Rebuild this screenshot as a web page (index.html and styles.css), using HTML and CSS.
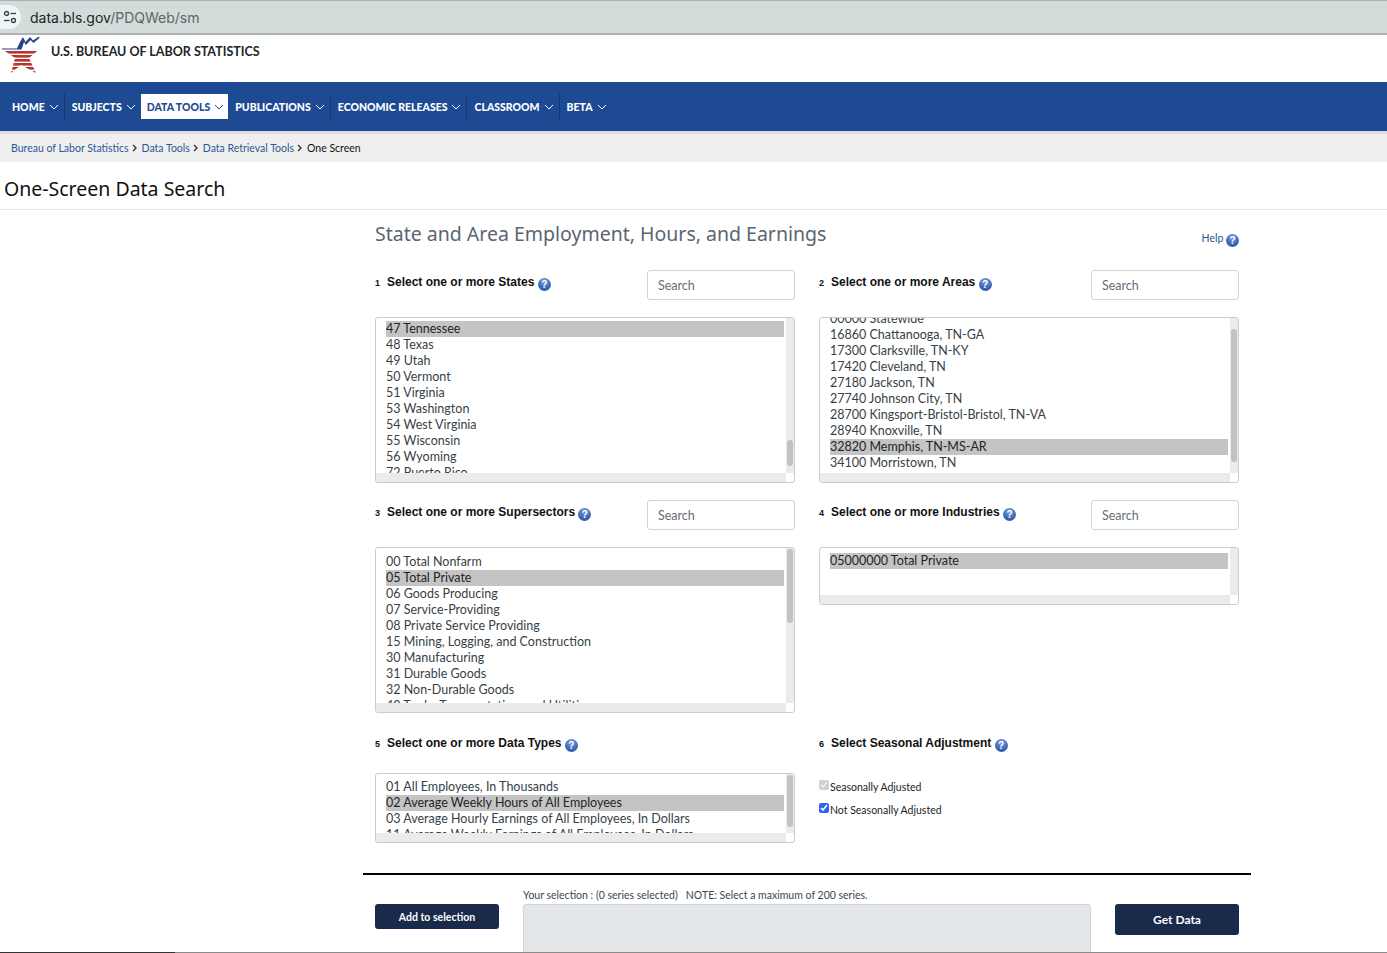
FILE: index.html
```html
<!DOCTYPE html>
<html lang="en">
<head>
<meta charset="UTF-8">
<title>One-Screen Data Search</title>
<link rel="stylesheet" href="styles.css">
</head>
<body>
<div class="addressbar">
  <span class="site-icon">
    <svg width="14" height="14" viewBox="0 0 14 14" fill="none" stroke="#3c4043" stroke-width="1.3">
      <circle cx="3.5" cy="3.5" r="2"/><path d="M7.5 3.5H13"/>
      <circle cx="10.5" cy="10.5" r="2"/><path d="M1 10.5H6.5"/>
    </svg>
  </span>
  <span class="url"><b>data.bls.gov</b>/PDQWeb/sm</span>
</div>

<header class="brand">
  <svg class="logo" width="40" height="38" viewBox="0 0 40 38">
    <defs>
      <clipPath id="starclip"><polygon points="1,13 15,13 20,1 25,13 38,13.500 28,22 35,37 20,29 10,37 14,22"/></clipPath>
    </defs>
    <g clip-path="url(#starclip)">
      <rect x="0" y="13.500" width="40" height="24" fill="#fff"/>
      <rect x="0" y="15" width="40" height="2.600" fill="#b5362c"/>
      <rect x="0" y="19" width="40" height="2.600" fill="#b5362c"/>
      <rect x="0" y="23" width="40" height="2.600" fill="#b5362c"/>
      <rect x="0" y="27" width="40" height="2.600" fill="#b5362c"/>
      <rect x="0" y="31" width="40" height="2.600" fill="#b5362c"/>
      <rect x="0" y="35" width="40" height="2.600" fill="#b5362c"/>
    </g>
    <path d="M1 12.500H16L19 6 22 1 24.500 6 29 1 32 4.500 38 0.500 38.500 2 32.500 7 29.500 4 25 9 23 6 20.500 13.500H1Z" fill="#27408b"/>
  </svg>
  <span class="brand-name">U.S. BUREAU OF LABOR STATISTICS</span>
</header>

<nav class="mainnav">
  <a class="nav-item nav-home">HOME<svg class="chev" viewBox="0 0 10 6"><path d="M1 1l4 4 4-4"/></svg></a>
  <a class="nav-item nav-subjects">SUBJECTS<svg class="chev" viewBox="0 0 10 6"><path d="M1 1l4 4 4-4"/></svg></a>
  <a class="nav-item nav-active">DATA TOOLS<svg class="chev" viewBox="0 0 10 6"><path d="M1 1l4 4 4-4"/></svg></a>
  <a class="nav-item">PUBLICATIONS<svg class="chev" viewBox="0 0 10 6"><path d="M1 1l4 4 4-4"/></svg></a>
  <a class="nav-item">ECONOMIC RELEASES<svg class="chev" viewBox="0 0 10 6"><path d="M1 1l4 4 4-4"/></svg></a>
  <a class="nav-item">CLASSROOM<svg class="chev" viewBox="0 0 10 6"><path d="M1 1l4 4 4-4"/></svg></a>
  <a class="nav-item nav-last">BETA<svg class="chev" viewBox="0 0 10 6"><path d="M1 1l4 4 4-4"/></svg></a>
</nav>

<div class="crumbs">
  <a>Bureau of Labor Statistics</a><svg class="crumb-sep" viewBox="0 0 6 8"><path d="M1 1l3 3-3 3"/></svg>
  <a>Data Tools</a><svg class="crumb-sep" viewBox="0 0 6 8"><path d="M1 1l3 3-3 3"/></svg>
  <a>Data Retrieval Tools</a><svg class="crumb-sep" viewBox="0 0 6 8"><path d="M1 1l3 3-3 3"/></svg>
  <span class="crumb-current">One Screen</span>
</div>

<h1 class="page-title">One-Screen Data Search</h1>

<main class="panel">
  <div class="panel-head">
    <h2>State and Area Employment, Hours, and Earnings</h2>
    <a class="help">Help <span class="q">?</span></a>
  </div>

  <div class="grid">
    <section class="field">
      <div class="field-head">
        <label><small>1</small>Select one or more States <span class="q">?</span></label>
        <input class="search" placeholder="Search">
      </div>
      <div class="list list-states">
        <div class="opts">
          <div class="opt">46 South Dakota</div>
          <div class="opt sel">47 Tennessee</div>
          <div class="opt">48 Texas</div>
          <div class="opt">49 Utah</div>
          <div class="opt">50 Vermont</div>
          <div class="opt">51 Virginia</div>
          <div class="opt">53 Washington</div>
          <div class="opt">54 West Virginia</div>
          <div class="opt">55 Wisconsin</div>
          <div class="opt">56 Wyoming</div>
          <div class="opt">72 Puerto Rico</div>
        </div>
        <i class="track-v"></i><i class="track-h"></i><i class="thumb"></i>
      </div>
    </section>

    <section class="field">
      <div class="field-head">
        <label><small>2</small>Select one or more Areas <span class="q">?</span></label>
        <input class="search" placeholder="Search">
      </div>
      <div class="list list-areas">
        <div class="opts">
          <div class="opt">00000 Statewide</div>
          <div class="opt">16860 Chattanooga, TN-GA</div>
          <div class="opt">17300 Clarksville, TN-KY</div>
          <div class="opt">17420 Cleveland, TN</div>
          <div class="opt">27180 Jackson, TN</div>
          <div class="opt">27740 Johnson City, TN</div>
          <div class="opt">28700 Kingsport-Bristol-Bristol, TN-VA</div>
          <div class="opt">28940 Knoxville, TN</div>
          <div class="opt sel">32820 Memphis, TN-MS-AR</div>
          <div class="opt">34100 Morristown, TN</div>
          <div class="opt">34980 Nashville-Davidson--Murfreesboro</div>
        </div>
        <i class="track-v"></i><i class="track-h"></i><i class="thumb"></i>
      </div>
    </section>

    <section class="field">
      <div class="field-head">
        <label><small>3</small>Select one or more Supersectors <span class="q">?</span></label>
        <input class="search" placeholder="Search">
      </div>
      <div class="list list-super">
        <div class="opts">
          <div class="opt">00 Total Nonfarm</div>
          <div class="opt sel">05 Total Private</div>
          <div class="opt">06 Goods Producing</div>
          <div class="opt">07 Service-Providing</div>
          <div class="opt">08 Private Service Providing</div>
          <div class="opt">15 Mining, Logging, and Construction</div>
          <div class="opt">30 Manufacturing</div>
          <div class="opt">31 Durable Goods</div>
          <div class="opt">32 Non-Durable Goods</div>
          <div class="opt">40 Trade, Transportation, and Utilities</div>
        </div>
        <i class="track-v"></i><i class="track-h"></i><i class="thumb"></i>
      </div>
    </section>

    <section class="field">
      <div class="field-head">
        <label><small>4</small>Select one or more Industries <span class="q">?</span></label>
        <input class="search" placeholder="Search">
      </div>
      <div class="list list-industries">
        <div class="opts">
          <div class="opt sel">05000000 Total Private</div>
        </div>
        <i class="track-v"></i><i class="track-h"></i>
      </div>
    </section>

    <section class="field field-low">
      <div class="field-head head-low">
        <label><small>5</small>Select one or more Data Types <span class="q">?</span></label>
      </div>
      <div class="list list-types">
        <div class="opts">
          <div class="opt">01 All Employees, In Thousands</div>
          <div class="opt sel">02 Average Weekly Hours of All Employees</div>
          <div class="opt">03 Average Hourly Earnings of All Employees, In Dollars</div>
          <div class="opt">11 Average Weekly Earnings of All Employees, In Dollars</div>
        </div>
        <i class="track-v"></i><i class="track-h"></i><i class="thumb"></i>
      </div>
    </section>

    <section class="field field-low">
      <div class="field-head head-low">
        <label><small>6</small>Select Seasonal Adjustment <span class="q">?</span></label>
      </div>
      <div class="checks">
        <label class="check"><input type="checkbox" checked disabled>Seasonally Adjusted</label>
        <label class="check"><input type="checkbox" checked>Not Seasonally Adjusted</label>
      </div>
    </section>
  </div>

  <div class="actions">
    <button class="btn btn-add">Add to selection</button>
    <div class="selection">
      <p>Your selection : (0 series selected) &nbsp; NOTE: Select a maximum of 200 series.</p>
      <div class="selection-box"></div>
    </div>
    <button class="btn btn-get">Get Data</button>
  </div>
</main>

<div class="window-edge"></div>
</body>
</html>
```

FILE: styles.css
```css
html, body {
  height: 953px;
  overflow: hidden;
}
body {
  margin: 0;
  position: relative;
  background: #fff;
  font-family: "Lato", "Noto Sans", sans-serif;
  color: #212529;
}

/* browser bar */
.addressbar {
  height: 32px;
  background: #d1dcdb;
  border-top: 1px solid #a9b2b1;
  border-bottom: 2px solid #a9b2b1;
  display: flex;
  align-items: center;
}
.site-icon {
  width: 22px;
  height: 24px;
  margin-left: -1px;
  border-radius: 0 12px 12px 0;
  background: #eef6f6;
  display: flex;
  align-items: center;
  justify-content: center;
  flex: none;
}
.url {
  margin-left: 9px;
  font-family: "Inter", "Roboto", sans-serif;
  font-size: 14px;
  color: #5f6663;
}
.url b {
  font-weight: 400;
  color: #202423;
}

/* header */
.brand {
  height: 47px;
  display: flex;
  align-items: flex-start;
  overflow: hidden;
}
.logo {
  margin: 1px 0 0 1px;
  flex: none;
}
.brand-name {
  margin: 9px 0 0 10px;
  font-size: 12.5px;
  font-weight: 700;
  color: #212529;
}

/* nav */
.mainnav {
  height: 49px;
  background: #1e4a93;
  display: flex;
  align-items: center;
  padding-left: 5px;
}
.nav-item {
  height: 25px;
  display: flex;
  align-items: center;
  padding: 0 5px 0 7px;
  border-right: 1px solid #1a3764;
  font-size: 10.5px;
  font-weight: 900;
  color: #fff;
  white-space: nowrap;
}
.nav-subjects {
  border-right: 0;
}
.nav-active {
  background: #fff;
  color: #1e4a93;
  border-right: 0;
  padding: 0 4px 0 6px;
}
.nav-last {
  border-right: 0;
}
.chev {
  width: 10px;
  height: 6px;
  margin-left: 4px;
  fill: none;
  stroke: #fff;
  stroke-width: 1;
}
.nav-active .chev {
  stroke: #1e4a93;
}

/* breadcrumb */
.crumbs {
  height: 28px;
  background: #efefef;
  border-top: 3px solid #dedede;
  display: flex;
  align-items: center;
  padding-left: 11px;
  font-size: 10.500px;
  color: #2b5a94;
}
.crumb-sep {
  width: 6px;
  height: 8px;
  margin: 0 4px 0 3px;
  fill: none;
  stroke: #333;
  stroke-width: 1.4;
}
.crumb-current {
  color: #111;
}

.page-title {
  margin: 0;
  height: 48px;
  box-sizing: border-box;
  padding: 13px 0 0 4px;
  border-bottom: 1px solid #e6e6e6;
  font-family: "Noto Sans", sans-serif;
  font-size: 19.500px;
  font-weight: 400;
  line-height: 27px;
  color: #111;
}

/* form panel */
.panel {
  width: 864px;
  margin-left: 363px;
  padding: 0 12px;
}
.panel-head {
  height: 60px;
  display: flex;
  justify-content: space-between;
}
.panel-head h2 {
  margin: 10px 0 0;
  font-family: "Noto Sans", sans-serif;
  font-size: 19.500px;
  font-weight: 400;
  line-height: 28px;
  color: #5a6570;
}
.help {
  margin-top: 20px;
  font-size: 10.500px;
  line-height: 16px;
  color: #2b5a94;
}
.q {
  display: inline-block;
  width: 13px;
  height: 13px;
  border-radius: 50%;
  background: radial-gradient(circle at 50% 25%, #7d9fdc, #2f5fb0 70%);
  color: #fff;
  font: bold 10px/13px "Liberation Sans", sans-serif;
  text-align: center;
  vertical-align: -2px;
}

.grid {
  display: grid;
  grid-template-columns: 420px 420px;
  column-gap: 24px;
  align-items: start;
}
.field {
  margin-bottom: 17px;
}
.field-low {
  margin: 1px 0 0;
}
.field-head {
  height: 30px;
  margin-bottom: 17px;
  display: flex;
  justify-content: space-between;
  align-items: flex-start;
}
.head-low {
  margin-bottom: 12px;
}
.field-head label {
  margin-top: 5px;
  font: bold 12px/15px "Liberation Sans", sans-serif;
  color: #111;
}
.field-head small {
  display: inline-block;
  width: 12px;
  font-size: 9px;
}
.search {
  width: 148px;
  height: 30px;
  box-sizing: border-box;
  padding: 0 10px;
  border: 1px solid #ced4da;
  border-radius: 3px;
  font-family: inherit;
  font-size: 12.500px;
}
.search::placeholder {
  color: #666e75;
}

/* listboxes, scrolled to where the selected row shows */
.list {
  position: relative;
  height: 164px;
  overflow: hidden;
  border: 1px solid #c9ccd0;
  border-radius: 3px;
}
.opts {
  padding: 0 10px;
  font-size: 12.500px;
  line-height: 16px;
  color: #373f47;
}
.opt {
  white-space: nowrap;
  height: 16px;
}
.opt.sel {
  background: #c4c4c4;
  color: #212529;
}
.list-states .opts { margin-top: -13px; }
.list-areas .opts { margin-top: -7px; }
.list-super .opts { margin-top: 6px; }
.list-industries .opts { margin-top: 5px; }
.list-types .opts { margin-top: 5px; }

.list-industries { height: 56px; }
.list-types { height: 68px; }

.track-v,
.track-h,
.thumb {
  position: absolute;
}
.track-v {
  top: 0;
  right: 0;
  bottom: 9px;
  width: 8px;
  background: #ebebeb;
}
.track-h {
  left: 0;
  right: 8px;
  bottom: 0;
  height: 9px;
  background: #ebebeb;
}
.thumb {
  right: 1px;
  width: 6px;
  border-radius: 3px;
  background: #c2c2c2;
}
.list-states .thumb { top: 122px; height: 26px; }
.list-areas .thumb { top: 11px; height: 133px; }
.list-super .thumb { top: 1px; height: 74px; }
.list-types .thumb { top: 1px; height: 52px; }

.checks {
  padding-top: 2px;
}
.check {
  display: flex;
  align-items: center;
  height: 23px;
  font-size: 10.500px;
  color: #212529;
}
.check input {
  width: 10px;
  height: 10px;
  margin: -3px 1px 0 0;
  accent-color: #2f62f0;
}

/* bottom strip */
.actions {
  width: 888px;
  margin: 30px 0 0 -12px;
  padding: 14px 12px 0;
  box-sizing: border-box;
  border-top: 2px solid #000;
  display: flex;
  align-items: flex-start;
  gap: 24px;
}
.btn {
  width: 124px;
  border: 0;
  border-radius: 3px;
  background: #1a2a4a;
  color: #fff;
  font-family: inherit;
  font-weight: 700;
  flex: none;
}
.btn-add {
  height: 25px;
  margin-top: 15px;
  font-size: 10.500px;
}
.btn-get {
  height: 31px;
  margin-top: 15px;
  font-size: 12px;
}
.selection {
  width: 568px;
  flex: none;
}
.selection p {
  margin: 0 0 3px;
  font-size: 10.500px;
  line-height: 12px;
  color: #3d4650;
}
.selection-box {
  height: 60px;
  box-sizing: border-box;
  background: #e4e7ea;
  border: 1px solid #ced4da;
  border-radius: 3px 3px 0 0;
}

/* edge of the captured window */
.window-edge {
  position: absolute;
  left: 0;
  right: 0;
  bottom: 0;
  height: 1px;
  background: linear-gradient(to right, #333 175px, #8a8a8a 175px);
}
```
